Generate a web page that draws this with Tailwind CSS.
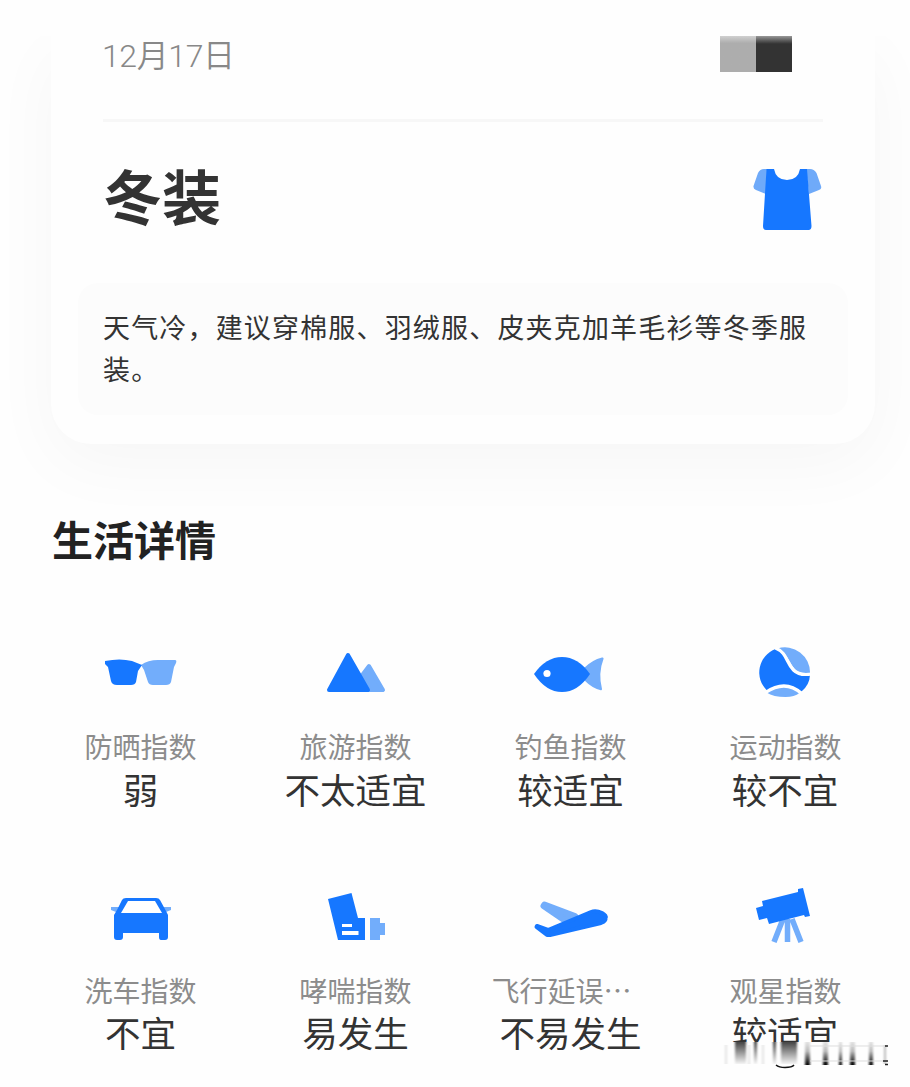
<!DOCTYPE html>
<html lang="zh-CN">
<head>
<meta charset="utf-8">
<title>生活详情</title>
<script src="https://cdn.jsdelivr.net/npm/@tailwindcss/browser@4"></script>
</head>
<body class="bg-[#fefefe] font-['Noto_Sans_CJK_SC',sans-serif] text-[#333]">
<div class="relative h-[1087px] w-[910px] overflow-hidden">
  <div class="h-[36px]"></div>
  <div class="h-[484px] overflow-hidden">
  <section class="ml-[51px] flex h-[408px] w-[824px] flex-col rounded-b-[40px] bg-[#fefefe] px-[27px] shadow-[0_20px_70px_rgba(0,0,0,0.035)]">
    <div class="mx-[25px] flex h-[86px] items-start justify-between border-b-[3px] border-[#f7f7f7]">
      <div class="-mt-[2px] -ml-px font-['Roboto','Noto_Sans_CJK_SC',sans-serif] text-[32px] leading-[44px] font-[350] tracking-[-0.400px] text-[#888]">12月17日</div>
      <div class="mr-[31px] flex h-[36px] w-[72px]">
        <div class="flex-1 bg-linear-to-b from-[#d0d0d0] to-[#adadad] to-20%"></div>
        <div class="flex-1 bg-linear-to-b from-[#999] to-[#333] to-22%"></div>
      </div>
    </div>
    <div class="mx-[25px] flex h-[161px] items-start justify-between">
      <h1 class="mt-[29px] text-[59px] leading-[88px] font-bold">冬装</h1>
      <svg class="mt-[44px]" width="70" height="66" viewBox="0 0 70 66">
        <path d="M14 3 H11 Q7 3 5 7 L0.500 20 Q0 23 3 24 L13 28 Z M53 3 H57 Q61 3 63.500 7 L68 20 Q69 23 66 24 L56 28 Z" fill="#6faaf9"/>
        <path d="M13.500 3 H21 Q23 14 34 14 Q45 14 47 3 H54 L58.500 60 Q58.500 64 55.500 64 H13 Q10 64 10 60 Z" fill="#1677ff"/>
      </svg>
    </div>
    <div class="h-[132px] rounded-[20px] bg-[#fcfcfc] px-[25px] pt-[23px]">
      <p class="w-[712px] text-[27px] leading-[42px] tracking-[1.170px]">天气冷，建议穿棉服、羽绒服、皮夹克加羊毛衫等冬季服装。</p>
    </div>
  </section>
  </div>
  <h2 class="-mt-[12px] ml-[52px] text-[41px] leading-[60px] font-bold text-[#222]">生活详情</h2>
  <div class="mt-[74px] ml-[33px] grid w-[860px] grid-cols-4 text-center">
    <div class="flex h-[244px] flex-col items-center">
      <svg width="81" height="60" viewBox="0 0 81 60">
        <path d="M41 23 Q48 18 58 18 H75 Q77 18 76 21 L74 25 L71 40 Q70 43 66 43 H53 Q49 43 48 40 L44 28 Z" fill="#72adfb"/>
        <path d="M5 19 Q20 16 32 19 L42 23 L38 29 L36 40 Q35 43 31 43 H17 Q12 43 11 39 L8 25 L5 22 Z" fill="#1677ff"/>
      </svg>
      <div class="mt-[24px] text-[28px] leading-[40px] text-[#8c8c8c]">防晒指数</div>
      <div class="-mt-px text-[35.500px] leading-[48px]">弱</div>
    </div>
    <div class="flex h-[244px] flex-col items-center">
      <svg width="81" height="60" viewBox="0 0 81 60">
        <path d="M54 24 L68 48 H45 L45 36 Z" fill="#72adfb" stroke="#72adfb" stroke-width="4" stroke-linejoin="round"/>
        <path d="M33 13 L53 48 H14 Z" fill="#1677ff" stroke="#1677ff" stroke-width="4" stroke-linejoin="round"/>
      </svg>
      <div class="mt-[24px] text-[28px] leading-[40px] text-[#8c8c8c]">旅游指数</div>
      <div class="-mt-px text-[35.500px] leading-[48px]">不太适宜</div>
    </div>
    <div class="flex h-[244px] flex-col items-center">
      <svg width="81" height="60" viewBox="0 0 81 60">
        <path d="M54 26 Q62 18 72 15.500 Q74 15 73.500 17 Q68 31 72 47 Q72 49 70 48 Q62 46 54 38 Z" fill="#72adfb"/>
        <path d="M4 32 Q16 15 32 15 Q48 15 60 32 Q48 50 32 50 Q16 50 4 32 Z" fill="#1677ff"/>
        <circle cx="17" cy="31.500" r="3.600" fill="#fff"/>
      </svg>
      <div class="mt-[24px] text-[28px] leading-[40px] text-[#8c8c8c]">钓鱼指数</div>
      <div class="-mt-px text-[35.500px] leading-[48px]">较适宜</div>
    </div>
    <div class="flex h-[244px] flex-col items-center">
      <svg width="81" height="60" viewBox="0 0 81 60">
        <g transform="translate(.500 0)">
        <path d="M32 6.500 A25 25 0 0 1 64.500 31 Q55 33 50 28 C42 18 42 11 32 6.500 Z M21 50.500 Q39 38 54 51 Q49 55 40 55 Q28 55 21 50.500 Z" fill="#72adfb"/>
        <path d="M30 7 A25 25 0 0 0 21.500 48.500 Q40 38 56 49.500 Q64 43 64.500 33 Q55 35 49 30 C40 20 42 12 30 7 Z" fill="#1677ff"/>
        <path d="M30 6 C42 11 40 20 48 28 Q54 34 66 32 M20 50.500 Q40 37 56 51.500" fill="none" stroke="#fff" stroke-width="3.200"/>
        </g>
      </svg>
      <div class="mt-[24px] text-[28px] leading-[40px] text-[#8c8c8c]">运动指数</div>
      <div class="-mt-px mr-px text-[35.500px] leading-[48px]">较不宜</div>
    </div>
    <div class="flex h-[201px] flex-col items-center">
      <svg width="81" height="60" viewBox="0 0 81 60">
        <path d="M11 21 H71 V24 L66 26 H16 L11 24 Z" fill="#72adfb"/>
        <path d="M26 12 H56 Q59 12 60 14 L66 25 L68 29 V51 Q68 54 65 54 H61 Q59 54 59 51 V47 H23 V51 Q23 54 20 54 H17 Q14 54 14 51 V29 L17 24 L22 14 Q23 12 26 12 Z" fill="#1677ff"/>
        <path d="M28 15 H55 L62 27 H21 Z" fill="#fff"/>
      </svg>
      <div class="mt-[24px] text-[28px] leading-[40px] text-[#8c8c8c]">洗车指数</div>
      <div class="-mt-[2px] text-[35.500px] leading-[48px]">不宜</div>
    </div>
    <div class="flex h-[201px] flex-col items-center">
      <svg width="81" height="60" viewBox="0 0 81 60">
        <path d="M55 32 H65 V37 H70 V49 H65 V54 H55 Z" fill="#72adfb"/>
        <path d="M13 13 L36.500 7 L43 32 H50 V54 H23 Z" fill="#1677ff"/>
        <path d="M27 38 H37 V41 H27 Z M27 45 H43.500 V49 H27 Z" fill="#fff"/>
      </svg>
      <div class="mt-[24px] text-[28px] leading-[40px] text-[#8c8c8c]">哮喘指数</div>
      <div class="-mt-[2px] text-[35.500px] leading-[48px]">易发生</div>
    </div>
    <div class="flex h-[201px] flex-col items-center">
      <svg width="81" height="60" viewBox="0 0 81 60">
        <path d="M14.500 18.500 L45 30 L34 34 L13.500 20 Z" fill="#72adfb" stroke="#72adfb" stroke-width="6" stroke-linejoin="round"/>
        <path d="M7 40 L18 44 L61 26 Q66 24 72 27 Q77 30 75.500 32 Q76 35 71 37 L20 49 H17 L6.500 41 Z" fill="#1677ff" stroke="#1677ff" stroke-width="4" stroke-linejoin="round"/>
      </svg>
      <div class="mt-[24px] mr-[18px] text-[28px] leading-[40px] text-[#8c8c8c]">飞行延误⋯</div>
      <div class="-mt-[2px] text-[35.500px] leading-[48px]">不易发生</div>
    </div>
    <div class="flex h-[201px] flex-col items-center">
      <svg width="81" height="60" viewBox="0 0 81 60">
        <path d="M38 33 L29 56 M42.500 33 V56 M47 33 L56 56" fill="none" stroke="#72adfb" stroke-width="5.500"/>
        <path d="M11 22 L18 20 L17 15 L53 6 L53 3 L58 2 L65 30 L60 31 L59 29 L24 38 L22 32 L14 34 Z" fill="#1677ff"/>
      </svg>
      <div class="mt-[24px] text-[28px] leading-[40px] text-[#8c8c8c]">观星指数</div>
      <div class="-mt-[2px] mr-px text-[35.500px] leading-[48px]">较适宜</div>
    </div>
  </div>
  <svg class="absolute top-[1040px] left-[715px]" width="180" height="30" viewBox="0 0 180 30">
    <defs>
      <linearGradient id="fade" x2="0" y2="1"><stop stop-color="#444"/><stop offset="1" stop-color="#f4f4f4"/></linearGradient>
      <linearGradient id="rise" x2="0" y2="1"><stop stop-color="#e4e4e4"/><stop offset=".4" stop-color="#bbb"/><stop offset="1" stop-color="#000"/></linearGradient>
      <filter id="soft" x="-5%" width="110%"><feGaussianBlur stdDeviation="1.300 0"/></filter>
    </defs>
    <rect y="2" width="180" height="28" fill="#fefefe"/>
    <g filter="url(#soft)">
      <path d="M20 2 H31 V24 H20 Z M39 2 H42 V24 H39 Z M58 2 H61 V24 H58 Z M66 2 H82 V24 H66 Z" fill="url(#fade)"/>
      <path d="M10 5 H12 V24 H10 Z M33 5 H35 V24 H33 Z M47 5 H49 V24 H47 Z" fill="#e4e4e4"/>
      <path d="M90 2 H95 V25 H90 Z M108 2 H113 V25 H108 Z M124 2 H127 V25 H124 Z M135 2 H140 V25 H135 Z M154 2 H158 V25 H154 Z" fill="url(#rise)"/>
      <path d="M169 5 H171 V24 H169 Z" fill="#bbb"/>
    </g>
    <path d="M95 6 H172 M95 21 H172" stroke="#ddd" stroke-width="1"/>
    <path d="M170 6 H173 M168 21 H173 M170 24.500 H173" stroke="#222" stroke-width="1.500"/>
    <path d="M61 25 Q64 27.500 70 27.500 Q77 27.500 79 25" fill="none" stroke="#111" stroke-width="1.500"/>
  </svg>
</div>
</body>
</html>
